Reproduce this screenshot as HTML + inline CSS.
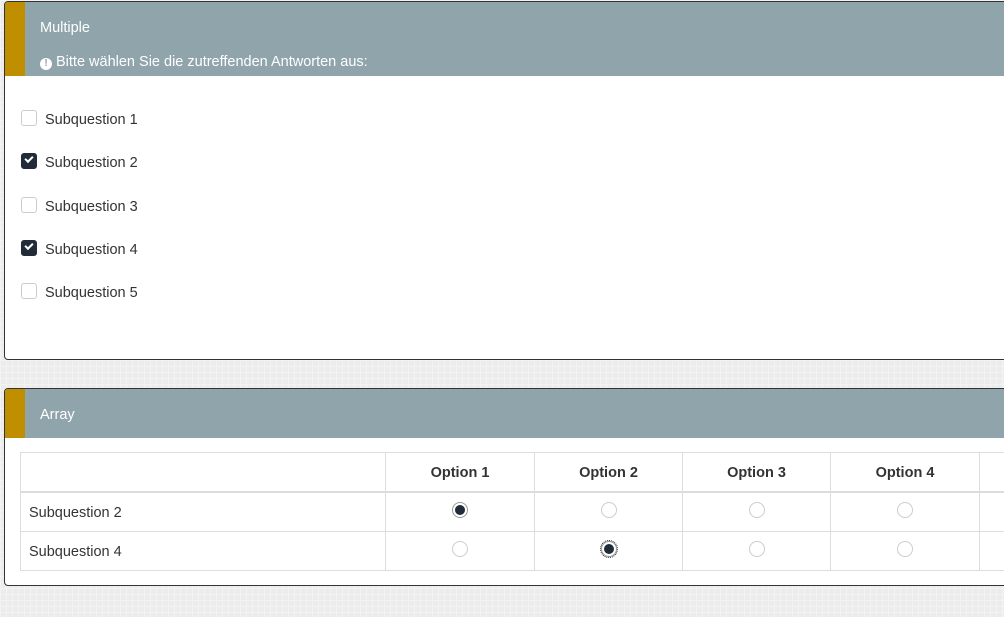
<!DOCTYPE html><html><head><style>
body{margin:0;width:1004px;height:617px;overflow:hidden;background:#ececec;background-image:linear-gradient(#f3f3f3 1px,transparent 1px),linear-gradient(90deg,#f3f3f3 1px,transparent 1px);background-size:6px 6px;font-family:"Liberation Sans",sans-serif;position:relative}
.p{position:absolute;left:4px;width:1010px;background:#fff;border:1px solid #333;border-radius:4px;overflow:hidden}
.h{position:absolute;left:0;top:0;right:0;background:#90a4ac}
.g{position:absolute;left:0;top:0;width:20px;bottom:0;background:#c08f00}
.t{position:absolute;color:#fff;font-size:14.5px}
.ic{display:inline-block;width:12px;height:12px;border-radius:50%;background:#fff;color:#90a4ac;font-size:10px;font-weight:bold;text-align:center;line-height:12px;vertical-align:-1px;margin-right:4px;position:relative;top:-1px}
.cb{position:absolute;left:16px;width:14px;height:14px;border:1px solid #ccc;border-radius:3px;background:#fff}
.cb.on{background:#222b38;border-color:#222b38}
.cb.on:after{content:"";position:absolute;left:3px;top:2px;width:6px;height:3px;border-left:2px solid #fff;border-bottom:2px solid #fff;transform:rotate(-45deg)}
.l{position:absolute;left:40px;font-size:14.5px;color:#333}
table{position:absolute;left:15px;top:63px;border-collapse:collapse;font-size:14.5px;color:#333;table-layout:fixed;width:1040px}
td{border:1px solid #ddd;height:39px;padding:2px 0 0 0;box-sizing:border-box}
th{border:1px solid #ddd;border-bottom:2px solid #ddd;height:36px;font-weight:bold;text-align:center;padding:2px 0 0 0}
.r{display:inline-block;width:16px;height:16px;border:1px solid #ccc;border-radius:50%;box-sizing:border-box;position:relative;vertical-align:middle;top:-3px}
.r.on{border-color:#999}
.r.on:after{content:"";position:absolute;left:2px;top:2px;width:10px;height:10px;border-radius:50%;background:#222b38}
td.c{text-align:center}
</style></head><body>
<div class="p" style="top:1px;height:357px">
<div class="h" style="height:74px"><div class="g"></div>
<div class="t" style="left:35px;top:18px">Multiple</div>
<div class="t" style="left:35px;top:52px"><span class="ic">!</span>Bitte wählen Sie die zutreffenden Antworten aus:</div></div>
<div class="cb" style="top:108px"></div><div class="l" style="top:110px">Subquestion 1</div>
<div class="cb on" style="top:151px"></div><div class="l" style="top:153px">Subquestion 2</div>
<div class="cb" style="top:195px"></div><div class="l" style="top:197px">Subquestion 3</div>
<div class="cb on" style="top:238px"></div><div class="l" style="top:240px">Subquestion 4</div>
<div class="cb" style="top:281px"></div><div class="l" style="top:283px">Subquestion 5</div>
</div>
<div class="p" style="top:388px;height:196px">
<div class="h" style="height:49px"><div class="g"></div>
<div class="t" style="left:35px;top:18px">Array</div></div>
<table><colgroup><col style="width:365px"><col style="width:149px"><col style="width:148px"><col style="width:148px"><col style="width:149px"><col></colgroup>
<tr><th></th><th>Option 1</th><th>Option 2</th><th>Option 3</th><th>Option 4</th><th></th></tr>
<tr><td style="padding-left:8px">Subquestion 2</td><td class="c"><span class="r on"></span></td><td class="c"><span class="r"></span></td><td class="c"><span class="r"></span></td><td class="c"><span class="r"></span></td><td></td></tr>
<tr><td style="padding-left:8px">Subquestion 4</td><td class="c"><span class="r"></span></td><td class="c"><span class="r on" style="outline:1px dotted #333"></span></td><td class="c"><span class="r"></span></td><td class="c"><span class="r"></span></td><td></td></tr>
</table></div>
</body></html>
